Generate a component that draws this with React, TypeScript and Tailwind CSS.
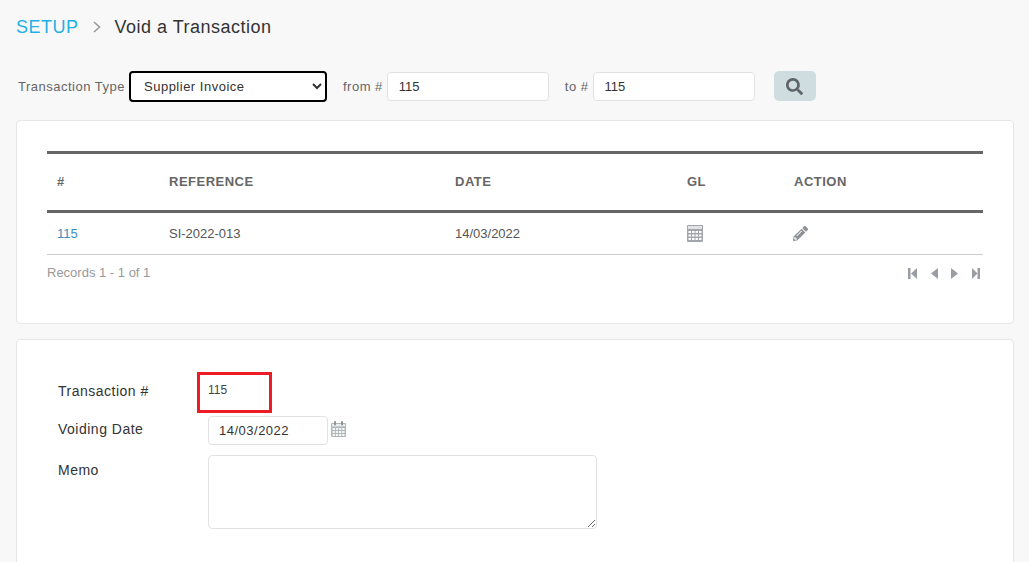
import { FaPencilAlt, FaSearch } from 'react-icons/fa'

const font = 'font-["Liberation_Sans",Arial,sans-serif]'

const TableIcon = () => (
  <svg width="16" height="17" viewBox="0 0 16 17" className="text-[#a2a6ab]">
    <rect x="0" y="0" width="16" height="17" rx="1" fill="currentColor" />
    <rect x="1" y="1" width="14" height="3" fill="#e0e2e4" />
    <g fill="#fff">
      <rect x="1.5" y="6" width="2.5" height="2" />
      <rect x="5" y="6" width="2.5" height="2" />
      <rect x="8.5" y="6" width="2.5" height="2" />
      <rect x="12" y="6" width="2.5" height="2" />
      <rect x="1.5" y="9.5" width="2.5" height="2" />
      <rect x="5" y="9.5" width="2.5" height="2" />
      <rect x="8.5" y="9.5" width="2.5" height="2" />
      <rect x="12" y="9.5" width="2.5" height="2" />
      <rect x="1.5" y="13" width="2.5" height="2" />
      <rect x="5" y="13" width="2.5" height="2" />
      <rect x="8.5" y="13" width="2.5" height="2" />
      <rect x="12" y="13" width="2.5" height="2" />
    </g>
  </svg>
)

const CalendarIcon = () => (
  <svg width="15" height="16" viewBox="0 0 15 16" className="text-[#b0b5b8]">
    <rect x="0" y="2" width="15" height="14" rx="1" fill="currentColor" />
    <rect x="1" y="3" width="13" height="2.5" fill="#e9ebec" />
    <rect x="3" y="0" width="2" height="4.5" rx="1" fill="#8f9497" />
    <rect x="10" y="0" width="2" height="4.5" rx="1" fill="#8f9497" />
    <g fill="#f4f5f5">
      <rect x="1.5" y="7" width="2.4" height="2" />
      <rect x="4.8" y="7" width="2.4" height="2" />
      <rect x="8" y="7" width="2.4" height="2" />
      <rect x="11.2" y="7" width="2.4" height="2" />
      <rect x="1.5" y="10" width="2.4" height="2" />
      <rect x="4.8" y="10" width="2.4" height="2" />
      <rect x="8" y="10" width="2.4" height="2" />
      <rect x="11.2" y="10" width="2.4" height="2" />
      <rect x="1.5" y="13" width="2.4" height="2" />
      <rect x="4.8" y="13" width="2.4" height="2" />
      <rect x="8" y="13" width="2.4" height="2" />
      <rect x="11.2" y="13" width="2.4" height="2" />
    </g>
  </svg>
)

const Pager = () => (
  <div className="flex items-center pr-[3px] pt-[1px] text-[#9a9ea3]">
    <svg width="9" height="11" viewBox="0 0 9 11" fill="currentColor" className="mr-[14px]">
      <rect x="0" y="0" width="2.5" height="11" />
      <path d="M9 0v11L3 5.5z" />
    </svg>
    <svg width="7" height="11" viewBox="0 0 7 11" fill="currentColor" className="mr-[13px]">
      <path d="M7 0v11L0 5.5z" />
    </svg>
    <svg width="7" height="11" viewBox="0 0 7 11" fill="currentColor" className="mr-[14px]">
      <path d="M0 0v11l7-5.5z" />
    </svg>
    <svg width="8" height="11" viewBox="0 0 8 11" fill="currentColor">
      <path d="M0 0v11l5.5-5.5z" />
      <rect x="5.5" y="0" width="2.5" height="11" />
    </svg>
  </div>
)

const gridCols = 'grid grid-cols-[112px_286px_232px_107px_1fr]'

export default function App() {
  return (
    <div className={`${font} h-[562px] overflow-hidden bg-[#f8f8f8] pl-4 pr-[15px]`}>
      <div className="flex h-[54px] items-center text-[18px] tracking-[0.5px]">
        <span className="text-[#1fb1e6]">SETUP</span>
        <svg width="8" height="12" viewBox="0 0 8 12" fill="none" stroke="#9a9a9a" strokeWidth="1.6" className="ml-[14px] mr-[14px]">
          <path d="M1 1l5.5 5L1 11" />
        </svg>
        <span className="text-[#333]">Void a Transaction</span>
      </div>

      <div className="mt-[17px] flex h-[31px] items-center text-[13px] tracking-[0.5px] text-[#666]">
        <label className="ml-[2px] mr-[4px]">Transaction Type</label>
        <select
          defaultValue="Supplier Invoice"
          className="h-[31px] w-[198px] rounded-[4px] border-2 border-black bg-white pl-[9px] text-[13px] text-[#333] outline-none"
        >
          <option>Supplier Invoice</option>
        </select>
        <label className="ml-[16px] mr-[4px]">from #</label>
        <input
          readOnly
          value="115"
          className="h-[29px] w-[162px] rounded-[4px] border border-[#e2e2e2] bg-white px-[11px] text-[13px] tracking-normal text-[#333] outline-none"
        />
        <label className="ml-[16px] mr-[4px]">to #</label>
        <input
          readOnly
          value="115"
          className="h-[29px] w-[162px] rounded-[4px] border border-[#e2e2e2] bg-white px-[11px] text-[13px] tracking-normal text-[#333] outline-none"
        />
        <button className="ml-[19px] flex h-[30px] w-[42px] items-center justify-center self-start rounded-[5px] bg-[#cfdde0] text-[#5f6468]">
          <FaSearch className="h-[17px] w-[17px]" />
        </button>
      </div>

      <div className="mt-[18px] h-[204px] rounded-[4px] border border-[#e6e6e6] bg-white px-[30px] pt-[30px]">
        <div className={`${gridCols} h-[62px] items-center border-y-[3px] border-[#666] text-[13px] font-bold tracking-[0.5px] text-[#666]`}>
          <div className="pl-[10px]">#</div>
          <div className="pl-[10px]">REFERENCE</div>
          <div className="pl-[10px]">DATE</div>
          <div className="pl-[10px]">GL</div>
          <div className="pl-[10px]">ACTION</div>
        </div>
        <div className={`${gridCols} h-[42px] items-center border-b border-[#cccccc] text-[13px] text-[#555]`}>
          <div className="pl-[10px] text-[#3a8fc4]">115</div>
          <div className="pl-[10px]">SI-2022-013</div>
          <div className="pl-[10px]">14/03/2022</div>
          <div className="pl-[10px]">
            <TableIcon />
          </div>
          <div className="pl-[9px] text-[#8e9194]">
            <FaPencilAlt className="h-[15px] w-[15px]" />
          </div>
        </div>
        <div className="flex h-[36px] items-center justify-between text-[13px] text-[#999]">
          <span>Records 1 - 1 of 1</span>
          <Pager />
        </div>
      </div>

      <div className="mt-[15px] h-[300px] rounded-[4px] border border-[#e6e6e6] bg-white pl-[41px] pt-[30px] text-[14px] tracking-[0.5px] text-[#333]">
        <div className="relative flex h-[46px] items-start pt-[11px]">
          <span className="w-[150px]">Transaction #</span>
          <span className="text-[12px] tracking-normal text-[#444]">115</span>
          <div className="absolute left-[139px] top-[2px] h-[41px] w-[75px] border-[3px] border-[#ed1c24]" />
        </div>
        <div className="flex h-[39px] items-start">
          <span className="w-[150px] pt-[3px]">Voiding Date</span>
          <input
            readOnly
            value="14/03/2022"
            className="h-[29px] w-[120px] rounded-[4px] border border-[#e2e2e2] bg-white px-[10px] text-[13px] text-[#333] outline-none"
          />
          <span className="ml-[3px] mt-[5px]">
            <CalendarIcon />
          </span>
        </div>
        <div className="flex items-start">
          <span className="w-[150px] pt-[5px]">Memo</span>
          <textarea
            readOnly
            className="h-[74px] w-[389px] rounded-[4px] border border-[#e2e2e2] bg-white outline-none"
          />
        </div>
      </div>
    </div>
  )
}
